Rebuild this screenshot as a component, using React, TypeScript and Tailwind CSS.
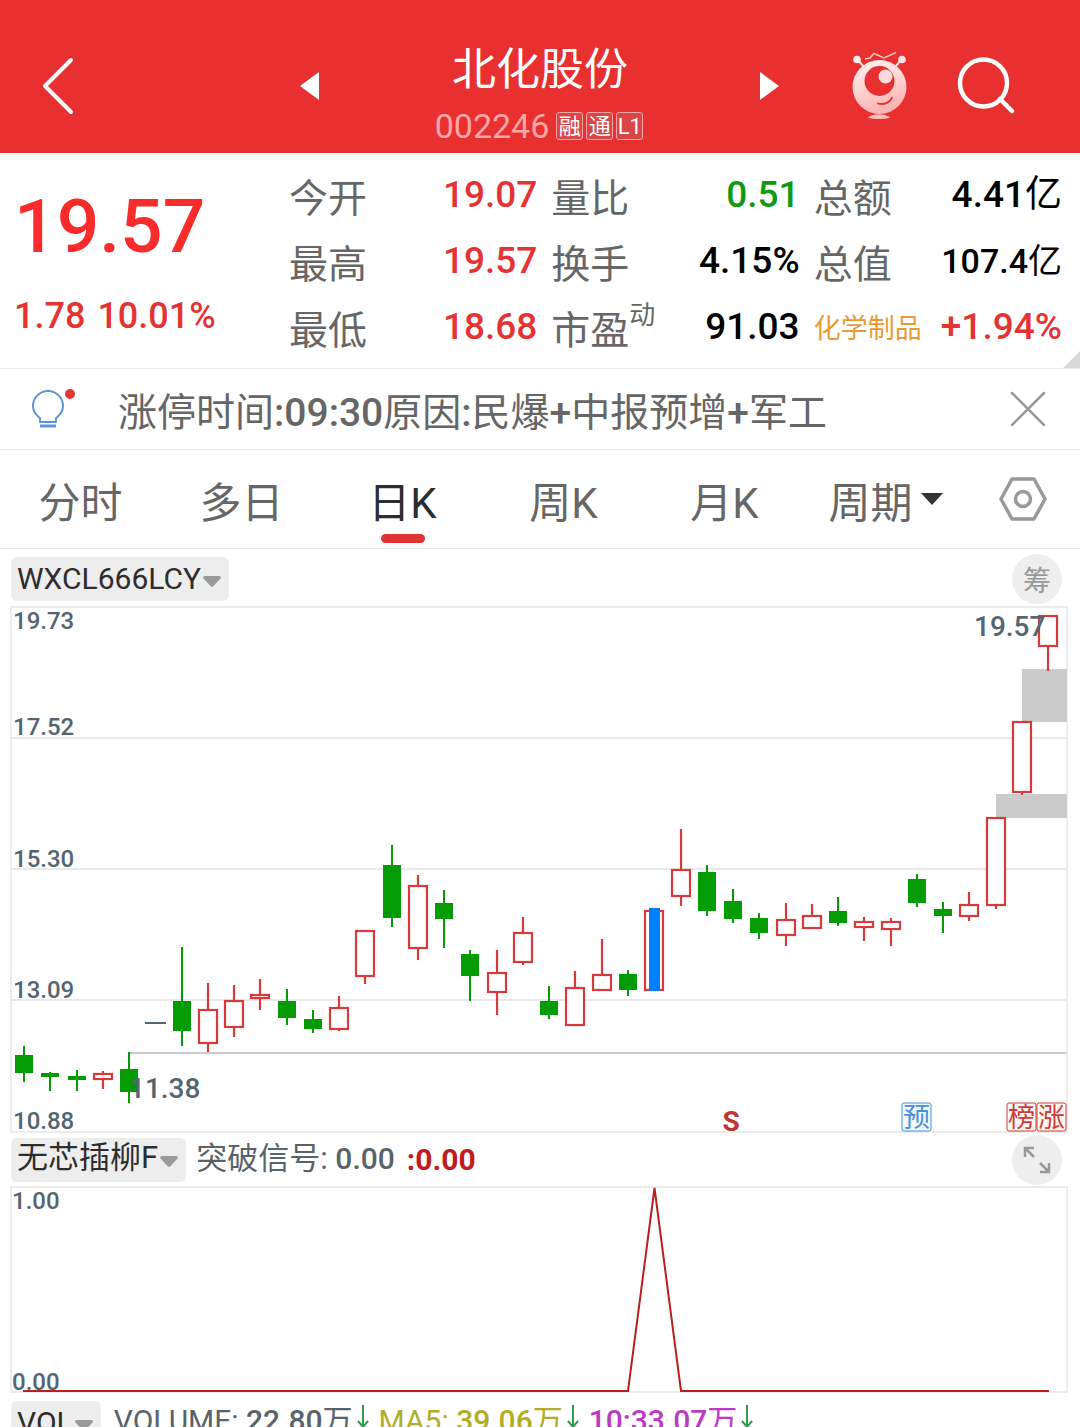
import { useState } from "react";
import clsx from "clsx";

type Candle = {
  up: boolean;
  high: number;
  top: number;
  bottom: number;
  low: number;
};

const up = (high: number, top: number, bottom: number, low: number): Candle => ({ up: true, high, top, bottom, low });
const down = (high: number, top: number, bottom: number, low: number): Candle => ({ up: false, high, top, bottom, low });

// null is a day without trading, drawn as a dash
const candles: (Candle | null)[] = [
  down(440, 449, 467, 476),
  down(466, 467, 471, 485),
  down(464, 470, 474, 485),
  up(465, 467, 474, 483),
  down(446, 463, 486, 497),
  null,
  down(341, 395, 425, 440),
  up(377, 403, 438, 446),
  up(379, 394, 422, 431),
  up(373, 388, 393, 404),
  down(383, 395, 412, 419),
  down(404, 413, 423, 427),
  up(390, 401, 424, 425),
  up(324, 324, 371, 378),
  down(239, 259, 312, 321),
  up(269, 279, 343, 354),
  down(284, 297, 313, 342),
  down(344, 348, 370, 395),
  up(344, 366, 387, 409),
  up(311, 326, 357, 359),
  down(380, 395, 409, 413),
  up(365, 381, 420, 420),
  up(333, 368, 385, 385),
  down(364, 368, 384, 390),
  up(304, 304, 385, 385),
  up(223, 263, 291, 300),
  down(259, 266, 305, 310),
  down(283, 295, 313, 317),
  down(307, 312, 327, 333),
  up(297, 313, 330, 340),
  up(298, 309, 323, 323),
  down(291, 305, 317, 320),
  up(311, 315, 322, 335),
  up(312, 315, 324, 340),
  down(268, 273, 297, 301),
  down(296, 303, 310, 327),
  up(286, 298, 311, 315),
  up(211, 211, 300, 303),
  up(115, 115, 187, 189),
  up(9, 9, 41, 65),
];

const candleX = (i: number) => Math.round(24 + i * 26.26);

const priceLabels = [
  { text: "19.73", y: 23 },
  { text: "17.52", y: 129 },
  { text: "15.30", y: 261 },
  { text: "13.09", y: 392 },
  { text: "10.88", y: 523 },
];

const quoteColumns = [
  [
    { label: "今开", value: "19.07", color: "text-[#e53333]" },
    { label: "最高", value: "19.57", color: "text-[#e53333]" },
    { label: "最低", value: "18.68", color: "text-[#e53333]" },
  ],
  [
    { label: "量比", value: "0.51", color: "text-[#0f9a0f]" },
    { label: "换手", value: "4.15%", color: "text-black" },
    { label: "市盈", sup: "动", value: "91.03", color: "text-black" },
  ],
  [
    { label: "总额", value: "4.41", unit: "亿", color: "text-black" },
    { label: "总值", value: "107.4", unit: "亿", color: "text-black", small: true },
    { label: "化学制品", value: "+1.94%", color: "text-[#e53333]", sector: true },
  ],
];

const tabs = ["分时", "多日", "日K", "周K", "月K"];

function Mascot() {
  return (
    <svg width="56" height="70" viewBox="852 51 56 70" fill="none" aria-hidden="true">
      <defs>
        <linearGradient id="head" x1="0" y1="0" x2="0.3" y2="1">
          <stop offset="0" stopColor="#fff4f4" />
          <stop offset="0.6" stopColor="#ffd0d0" />
          <stop offset="1" stopColor="#fbb4b4" />
        </linearGradient>
      </defs>
      <path d="M857 59l7 8M902 59l-7 8" stroke="#ffdede" strokeWidth="2" />
      <circle cx="857" cy="59.5" r="3.8" fill="#fff0f0" />
      <circle cx="902" cy="59.5" r="3.8" fill="#ffe2e2" />
      <path d="M865 59l5-1 4-4.500 10 4.500 12-5.500" stroke="#ffc4c4" strokeWidth="1.500" />
      <circle cx="879.5" cy="87" r="27" fill="url(#head)" />
      <circle cx="879.5" cy="81" r="15" fill="#e83030" />
      <circle cx="885.5" cy="76.500" r="7" fill="#ffd9d9" />
      <path d="M878 103.500c6 1.500 12-.5 14-6" stroke="#e83030" strokeWidth="1.800" strokeLinecap="round" />
      <path d="M868 117.500c4-4.500 18-4.500 22 0-5 2-17 2-22 0z" fill="#ffb9b9" />
    </svg>
  );
}

function Header() {
  return (
    <header className="grid grid-cols-[1fr_480px_1fr] items-center bg-[#e83030] pt-[18px] text-white">
      <button type="button" aria-label="返回" className="pl-[42px]">
        <svg width="32" height="60" viewBox="0 0 32 60" fill="none" stroke="#fff" strokeWidth="4" strokeLinecap="round" strokeLinejoin="round">
          <path d="M29 4L3 30l26 26" />
        </svg>
      </button>
      <div className="flex items-center justify-between">
        <button type="button" aria-label="上一只">
          <svg width="20" height="28" viewBox="0 0 20 28" fill="#fff">
            <path d="M19 0v28L0 14z" />
          </svg>
        </button>
        <div className="flex flex-col items-center pt-6 pb-[7px]">
          <h1 className="text-[44px] leading-[56px]">北化股份</h1>
          <div className="mt-2 mr-[2px] flex items-center gap-[3px]">
            <span className="mr-1 text-[34px] leading-10 text-[#ffa6a6]">002246</span>
            {["融", "通", "L1"].map((tag) => (
              <span
                key={tag}
                className="flex h-7 w-[27px] items-center justify-center rounded-[3px] border border-[#f5a5a5] bg-[#da4545] pt-[2px] text-[22px] leading-6"
              >
                {tag}
              </span>
            ))}
          </div>
        </div>
        <button type="button" aria-label="下一只">
          <svg width="20" height="28" viewBox="0 0 20 28" fill="#fff">
            <path d="M0 0v28l19-14z" />
          </svg>
        </button>
      </div>
      <div className="flex items-center justify-end gap-[49px] pr-16">
        <button type="button" aria-label="助手">
          <Mascot />
        </button>
        <button type="button" aria-label="搜索">
          <svg width="59" height="58" viewBox="957 57 59 58" fill="none" stroke="#fff" strokeWidth="4.500" strokeLinecap="round">
            <circle cx="983.5" cy="83" r="23.500" />
            <path d="M1000 99l12 12" />
          </svg>
        </button>
      </div>
    </header>
  );
}

function Quote() {
  return (
    <section className="relative grid grid-cols-[275px_1fr_1fr_1fr] gap-x-[14px] border-b border-[#ebebeb] pt-[9px] pr-[18px] pb-2 font-medium">
      <div className="pl-[14px] text-[#e53333]">
        <div className="mt-4 text-[75px] leading-[96px] text-[#f92b2b]">19.57</div>
        <div className="mt-[18px] flex gap-3 text-[36px] leading-[48px]">
          <span>1.78</span>
          <span>10.01%</span>
        </div>
      </div>
      {quoteColumns.map((rows, i) => (
        <dl key={i}>
          {rows.map((row) => (
            <div key={row.label} className="flex h-[66px] items-start justify-between">
              <dt
                className={clsx(
                  "font-normal whitespace-nowrap",
                  row.sector ? "text-[27px] leading-[70px] text-[#ea9a35]" : "text-[39px] leading-[74px] text-[#666]"
                )}
              >
                {row.label}
                {row.sup && <sup className="top-[-20px] text-[26px] leading-none">{row.sup}</sup>}
              </dt>
              <dd className={clsx("leading-[66px]", row.small ? "text-[34px]" : "text-[37px]", row.color)}>
                {row.value}
                {row.unit && <span className="font-normal">{row.unit}</span>}
              </dd>
            </div>
          ))}
        </dl>
      ))}
      <svg className="absolute right-0 bottom-0" width="17" height="17" viewBox="0 0 17 17" fill="#d8d8d8" aria-hidden="true">
        <path d="M17 0v17H0z" />
      </svg>
    </section>
  );
}

function Notice() {
  return (
    <section className="flex items-center border-b border-[#ebebeb] pr-[33px] pl-[30px]">
      <svg width="48" height="48" viewBox="30 385 48 48" fill="none" aria-hidden="true">
        <path
          d="M40 422v-4c-4-3-7-7-7-12a15 15 0 0 1 30 0c0 5-3 9-7 12v4z"
          stroke="#5b95d6"
          strokeWidth="2"
          strokeLinejoin="round"
        />
        <path d="M40 426h16" stroke="#5b95d6" strokeWidth="3" />
        <circle cx="70" cy="394" r="5" fill="#e03636" />
      </svg>
      <p className="flex-1 pt-2 pl-10 text-[39px] leading-[72px] whitespace-nowrap text-[#666]">
        涨停时间<span className="font-medium">:09:30</span>原因<span className="font-medium">:</span>民爆
        <span className="font-medium">+</span>中报预增<span className="font-medium">+</span>军工
      </p>
      <button type="button" aria-label="关闭">
        <svg width="38" height="38" viewBox="0 0 38 38" fill="none" stroke="#999" strokeWidth="2.500" strokeLinecap="round">
          <path d="M3 3l32 32M35 3L3 35" />
        </svg>
      </button>
    </section>
  );
}

function Tabs() {
  const [active, setActive] = useState("日K");
  return (
    <nav className="grid grid-cols-[repeat(6,161fr)_114fr] border-b border-[#ebebeb] text-[42px] leading-[60px] text-[#666]">
      {tabs.map((tab) => (
        <button
          key={tab}
          type="button"
          onClick={() => setActive(tab)}
          className={clsx("flex flex-col items-center pt-6 pb-[5px]", tab === active && "text-[#2d2d2d]")}
        >
          {tab}
          <span className={clsx("h-[9px] w-11 rounded-full", tab === active && "bg-[#e03333]")} />
        </button>
      ))}
      <button type="button" className="flex items-start justify-center gap-2 pt-6">
        周期
        <svg className="mt-[19px]" width="22" height="12" viewBox="0 0 22 12" fill="#333" aria-hidden="true">
          <path d="M0 0h22L11 12z" />
        </svg>
      </button>
      <button type="button" aria-label="设置" className="flex items-center justify-center">
        <svg width="48" height="46" viewBox="0 0 48 46" fill="none" stroke="#999" strokeWidth="3.500" strokeLinejoin="round">
          <path d="M13 3h22l11 20-11 20H13L2 23z" />
          <circle cx="24" cy="23" r="7.500" />
        </svg>
      </button>
    </nav>
  );
}

function IndicatorButton({ name }: { name: string }) {
  return (
    <button type="button" className="flex h-11 items-center gap-[2px] rounded-md bg-[#ededed] px-[6px] pb-[2px] text-[#2d2d2d]">
      {name}
      <svg className="mt-[6px] mr-[2px]" width="18" height="11" viewBox="0 0 18 11" fill="#999" aria-hidden="true">
        <path d="M1 0h16l1 2-8 8.500q-1 .8-2 0L0 2z" />
      </svg>
    </button>
  );
}

function Flag({ x, color, fill, children }: { x: number; color: string; fill: string; children: string }) {
  return (
    <g>
      <rect x={x} y="497" width="29" height="28" rx="2" fill={fill} stroke={color} />
      <text x={x + 14.5} y="521" textAnchor="middle" fontSize="27" fill={color}>
        {children}
      </text>
    </g>
  );
}

function CandleChart() {
  return (
    <svg className="block h-auto w-full overflow-visible" viewBox="0 0 1080 527" role="img" aria-label="日K线图">
      <path d="M11 132h1056M11 263h1056M11 394h1056" stroke="#e2e2e2" strokeWidth="1.500" />
      <path d="M129 447h938" stroke="#cacaca" strokeWidth="2" />
      <rect x="11" y="1" width="1056" height="525" fill="none" stroke="#e6e6e6" strokeWidth="1.500" />
      <rect x="1022" y="63" width="45" height="53" fill="#cbcbcb" />
      <rect x="996" y="188" width="71" height="24" fill="#cbcbcb" />
      {priceLabels.map((label) => (
        <text key={label.text} x="13" y={label.y} fontSize="24" fontWeight="500" fill="#54656f">
          {label.text}
        </text>
      ))}
      {candles.map((c, i) => {
        const x = candleX(i);
        if (!c) {
          return <path key={i} d={`M${x - 10} 417h21`} stroke="#54656f" strokeWidth="2" />;
        }
        return c.up ? (
          <g key={i} stroke="#d63a3a" strokeWidth="2.200" fill="none">
            <path d={`M${x} ${c.high}V${c.top}M${x} ${c.bottom}V${c.low}`} />
            <rect x={x - 9} y={c.top + 1} width="18" height={c.bottom - c.top - 2} fill="#fff" />
          </g>
        ) : (
          <g key={i} fill="#049c04">
            <rect x={x - 1} y={c.high} width="2" height={c.low - c.high} />
            <rect x={x - 9} y={c.top} width="18" height={c.bottom - c.top} />
          </g>
        );
      })}
      <rect x="649" y="302" width="11" height="83" fill="#0080ff" />
      <text x="974" y="30" fontSize="28" fontWeight="500" fill="#54656f">
        19.57
      </text>
      <text x="129" y="492" fontSize="28" fontWeight="500" fill="#54656f">
        11.38
      </text>
      <text x="731" y="525" textAnchor="middle" fontSize="28" fontWeight="700" fill="#c03434">
        S
      </text>
      <Flag x={902} color="#4b8fdb" fill="#effaff">预</Flag>
      <Flag x={1007} color="#cf3c36" fill="#fff6f6">榜</Flag>
      <Flag x={1037} color="#cf3c36" fill="#fff6f6">涨</Flag>
    </svg>
  );
}

function SignalChart() {
  return (
    <svg className="block h-auto w-full overflow-visible" viewBox="0 0 1080 207" role="img" aria-label="突破信号">
      <rect x="11" y="1" width="1056" height="205" fill="none" stroke="#e6e6e6" strokeWidth="1.500" />
      <text x="12" y="23" fontSize="24" fontWeight="500" fill="#54656f">
        1.00
      </text>
      <text x="12" y="204" fontSize="24" fontWeight="500" fill="#54656f">
        0.00
      </text>
      <path d="M23 205H628L654.500 2 681 205h368" fill="none" stroke="#b82020" strokeWidth="2" />
    </svg>
  );
}

function DownArrow() {
  return (
    <svg className="mr-[10px] mb-3 ml-1" width="12" height="24" viewBox="0 0 12 24" fill="none" stroke="#2f9e4b" strokeWidth="2" aria-hidden="true">
      <path d="M6 0v22M1 16l5 6 5-6" />
    </svg>
  );
}

export default function App() {
  return (
    <div className="h-screen overflow-hidden bg-white font-['Roboto','Noto_Sans_CJK_SC',sans-serif]">
      <Header />
      <main>
        <Quote />
        <Notice />
        <Tabs />

        <div className="flex h-[57px] items-center justify-between pt-[3px] pr-[18px] pl-[11px] text-[30px]">
          <IndicatorButton name="WXCL666LCY" />
          <button type="button" className="size-[50px] rounded-full bg-[#eee] text-[28px] leading-[56px] text-[#999]">
            筹
          </button>
        </div>
        <CandleChart />

        <div className="flex h-[53px] items-center pr-[18px] pl-[11px] text-[31px] text-[#59636b]">
          <IndicatorButton name="无芯插柳F" />
          <span className="ml-[10px] pb-px">
            突破信号: <span className="text-[30px] font-medium">0.00</span>
          </span>
          <span className="ml-3 pb-px text-[30px] font-bold text-[#c01c1c]">:0.00</span>
          <button type="button" aria-label="全屏" className="ml-auto flex size-[50px] items-center justify-center rounded-full bg-[#eee]">
            <svg width="28" height="28" viewBox="0 0 28 28" fill="none" stroke="#999" strokeWidth="2.500">
              <path d="M2 11V2h9M2 2l9 9M26 17v9h-9M26 26l-9-9" />
            </svg>
          </button>
        </div>
        <SignalChart />

        <div className="flex items-center pt-[5px] pl-[11px] text-[30px] text-[#59636b]">
          <IndicatorButton name="VOL" />
          <span className="ml-[13px] pb-[5px]">
            VOLUME: <span className="font-medium">22.80</span>万
          </span>
          <DownArrow />
          <span className="pb-[5px] text-[#b3ad26]">
            MA5: <span className="font-medium">39.06</span>万
          </span>
          <DownArrow />
          <span className="pb-[5px] text-[#bd3ac4]">
            <span className="font-medium">10:33.07</span>万
          </span>
          <DownArrow />
        </div>
      </main>
    </div>
  );
}
